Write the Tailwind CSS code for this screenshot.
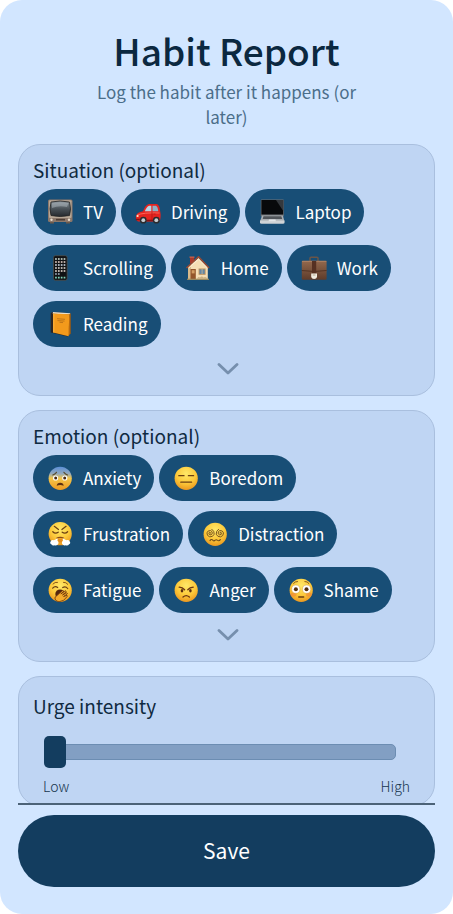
<!DOCTYPE html>
<html lang="en">
<head>
  <meta charset="UTF-8" />
  <meta name="viewport" content="width=device-width, initial-scale=1.0"/>
  <title>Habit Report</title>
  <script src="https://cdn.jsdelivr.net/npm/@tailwindcss/browser@4"></script>
</head>

<body class="bg-white font-['Noto_Sans_CJK_SC','Noto_Sans',sans-serif] text-[#0f2a41]">

  <!-- shared gradients -->
  <svg class="absolute size-0" aria-hidden="true">
    <defs>
      <radialGradient id="face" cx="0.5" cy="0.3" r="0.75">
        <stop offset="0" stop-color="#ffe868" />
        <stop offset="0.55" stop-color="#fcc93a" />
        <stop offset="1" stop-color="#e8901c" />
      </radialGradient>
      <linearGradient id="scared" x1="0" y1="0" x2="0" y2="1">
        <stop offset="0" stop-color="#5b8fd8" />
        <stop offset="0.3" stop-color="#93a9bd" />
        <stop offset="0.5" stop-color="#f4c64a" />
        <stop offset="1" stop-color="#ec9a22" />
      </linearGradient>
      <linearGradient id="screen" x1="0" y1="0" x2="0" y2="1">
        <stop offset="0" stop-color="#8b949b" />
        <stop offset="0.5" stop-color="#4a5258" />
        <stop offset="1" stop-color="#25292d" />
      </linearGradient>
      <linearGradient id="leather" x1="0" y1="0" x2="0" y2="1">
        <stop offset="0" stop-color="#94694d" />
        <stop offset="1" stop-color="#5d3b2a" />
      </linearGradient>
    </defs>
  </svg>

  <div class="flex h-screen flex-col rounded-[22px] bg-[#d2e6ff] px-[18px] pb-[27px]">

    <header class="px-16 pt-[25px] pb-[15px] text-center">
      <h1 class="text-[37px] leading-[50px] font-medium text-[#0b2840]">Habit Report</h1>
      <p class="mt-1 text-[17px] leading-[25px] text-[#4b6e8a]">Log the habit after it happens (or later)</p>
    </header>

    <main class="flex min-h-0 flex-1 flex-col gap-[14px] overflow-y-auto border-b-2 border-[#4c6378] [scrollbar-width:none]">

      <section class="shrink-0 rounded-[22px] border border-[#a9bfde] bg-[#bfd5f3] px-[14px] pt-3">
        <h2 class="mb-[6px] text-[19px] leading-[26px]">Situation (optional)</h2>
        <div class="flex flex-wrap gap-x-[5px] gap-y-[10px]">
          <button class="flex h-[46px] items-center gap-[10px] rounded-full bg-[#184e76] pr-[13px] pl-[14px] text-[17px] text-white">
            <svg class="size-[26px]" viewBox="0 0 26 26">
              <path d="M3 22h4v2.600H3zM19 22h4v2.600h-4z" fill="#6d5a4c" />
              <rect x="1" y="0.500" width="24.500" height="22.500" rx="1.500" fill="#8b776a" />
              <rect x="2" y="1.200" width="22.500" height="17.800" rx="1" fill="#b7a796" />
              <path d="M4 3Q13 1 22.500 3Q24.500 10 22.500 16.500Q13 18.600 4 16.500Q2 10 4 3z" fill="url(#screen)" stroke="#222" stroke-width="0.800" />
              <path d="M5 4Q13 2.500 21.500 4L20 8Q12 6 5 9z" fill="#b9c2c8" opacity="0.450" />
              <path d="M9 20.700h9" stroke="#4d3d33" stroke-width="1.600" />
              <circle cx="4.500" cy="20.700" r="1.200" fill="#e7ddce" /><circle cx="22" cy="20.700" r="1.200" fill="#e7ddce" />
            </svg>
            TV
          </button>
          <button class="flex h-[46px] items-center gap-[10px] rounded-full bg-[#184e76] pr-[13px] pl-[14px] text-[17px] text-white">
            <svg class="size-[26px]" viewBox="0 0 26 26">
              <path d="M1 17Q1.500 13.500 8 12.200Q10.500 5.500 14 5H21.500Q24.500 5 25.200 12.500Q26.200 17 25 21.500L22 22.500H3Q0.500 21.500 1 17z" fill="#e5231f" />
              <path d="M9.800 12.300Q11.800 7.200 14.200 6.700H16.300V12.300z" fill="#b9d4e4" />
              <path d="M17.500 6.700H21Q22.700 7.500 23.300 12.300H17.500z" fill="#8fb1c6" />
              <path d="M2 16.200Q8 13.300 24.500 14" stroke="#ff6b5c" stroke-width="0.900" fill="none" />
              <path d="M17 13v8M18.500 15h2" stroke="#a5120f" stroke-width="0.600" />
              <path d="M0.800 20.500h4M11.500 21.500h7" stroke="#871311" stroke-width="1.400" />
              <circle cx="2.600" cy="17" r="1.100" fill="#ffe9c7" />
              <circle cx="8.300" cy="21.200" r="3.400" fill="#2b2b2e" /><circle cx="8.300" cy="21.200" r="1.900" fill="#c6ccd1" />
              <circle cx="21.300" cy="21.200" r="3.400" fill="#2b2b2e" /><circle cx="21.300" cy="21.200" r="1.900" fill="#c6ccd1" />
            </svg>
            Driving
          </button>
          <button class="flex h-[46px] items-center gap-[10px] rounded-full bg-[#184e76] pr-[13px] pl-[14px] text-[17px] text-white">
            <svg class="size-[26px]" viewBox="0 0 26 26">
              <rect x="1.800" y="0.600" width="23" height="17" rx="0.800" fill="#6f7377" />
              <rect x="2.400" y="1" width="21.800" height="14.500" fill="#08090b" />
              <path d="M17 1h7.200V12z" fill="#34383d" />
              <path d="M3 16.500H23.800L25.500 22.500H1z" fill="#a9adb1" />
              <path d="M4.500 17.300H22.300L23.200 20H3.700z" fill="#505459" />
              <path d="M1 21.500H25.500V24Q25.300 24.800 24 24.800H2.500Q1.200 24.800 1 24z" fill="#d0d3d6" />
              <path d="M10 20.600h6.500l0.400 1.700H9.600z" fill="#e4e6e8" />
            </svg>
            Laptop
          </button>
          <button class="flex h-[46px] items-center gap-[10px] rounded-full bg-[#184e76] pr-[13px] pl-[14px] text-[17px] text-white">
            <svg class="size-[26px]" viewBox="0 0 26 26">
              <rect x="6.500" y="0.700" width="13.600" height="24.600" rx="1.800" fill="#111214" stroke="#555047" stroke-width="0.700" />
              <g stroke-width="1.700" stroke-dasharray="1.700 1.150" fill="none">
                <path d="M8.100 4H19" stroke="#d9e7dc" />
                <path d="M8.100 7H19" stroke="#f0d9cf" />
                <path d="M8.100 10H19" stroke="#d5e0ee" />
                <path d="M8.100 13H19" stroke="#e6e0da" />
                <path d="M8.100 16H19" stroke="#f1e5da" />
                <path d="M8.100 19H13" stroke="#a7b6c9" />
                <path d="M8.100 22.700H19" stroke="#7fd5b8" />
              </g>
            </svg>
            Scrolling
          </button>
          <button class="flex h-[46px] items-center gap-[10px] rounded-full bg-[#184e76] pr-[13px] pl-[14px] text-[17px] text-white">
            <svg class="size-[26px]" viewBox="0 0 26 26">
              <path d="M5 2h4v6H5z" fill="#a8392c" />
              <path d="M4.500 1.500h5v1.300h-5z" fill="#c9604a" />
              <path d="M3 12L13.500 3L22.800 12.500V24.500H3z" fill="#f5deb5" />
              <path d="M3 12L6 9.500V24.500H3z" fill="#d9b98a" />
              <path d="M1.500 13L13.500 1.800L24 13" fill="none" stroke="#9c4a32" stroke-width="1.500" stroke-linejoin="round" />
              <path d="M3.800 13L13.500 4.200L22.500 13" fill="none" stroke="#fff3dc" stroke-width="0.800" />
              <rect x="5.500" y="14" width="5.300" height="10.500" fill="#94562b" />
              <rect x="6.700" y="15.200" width="2.900" height="3.200" fill="#d39d63" />
              <rect x="13.600" y="13.500" width="7" height="6.300" fill="#b98f5c" /><rect x="14.500" y="14.400" width="5.200" height="4.500" fill="#6488a5" />
              <path d="M17.100 14v5" stroke="#d9c19a" stroke-width="0.700" />
              <path d="M2 24.300H24" stroke="#9c8b5d" stroke-width="1.200" />
              <path d="M12 24q1-3 3-1.500q2-2 3.500 0q2.500-1.500 4 1.500z" fill="#c9b083" />
            </svg>
            Home
          </button>
          <button class="flex h-[46px] items-center gap-[10px] rounded-full bg-[#184e76] pr-[13px] pl-[14px] text-[17px] text-white">
            <svg class="size-[26px]" viewBox="0 0 26 26">
              <path d="M9 6V3.200Q9 2.200 10 2.200H16Q17 2.200 17 3.200V6" fill="none" stroke="#6a5548" stroke-width="1.500" />
              <rect x="0.800" y="5.800" width="24.800" height="19" rx="1" fill="url(#leather)" />
              <path d="M0.800 15.500Q13 17.500 25.600 15.500" stroke="#4a2c1f" stroke-width="0.800" fill="none" />
              <path d="M1 6.400H25.400" stroke="#b58767" stroke-width="0.800" />
              <rect x="11" y="6" width="4.200" height="12.500" fill="#563122" />
              <path d="M10.200 18.500H16V22Q15.500 24 13.100 24Q10.700 24 10.200 22z" fill="#f1ede2" />
              <path d="M11.700 19.500h2.800v1h-2.800z" fill="#b7ab91" />
            </svg>
            Work
          </button>
          <button class="flex h-[46px] items-center gap-[10px] rounded-full bg-[#184e76] pr-[13px] pl-[14px] text-[17px] text-white">
            <svg class="size-[26px]" viewBox="0 0 26 26">
              <path d="M3.700 2L6 1L23.500 2.300V22.500L20.500 25.400L3.700 21.500z" fill="#2d2521" />
              <path d="M6 1L23.500 2.300L22.500 3.500L5.700 2.700z" fill="#e8e0d0" />
              <path d="M22.300 3.200L23.600 2.500V22.700L20.800 25.200z" fill="#b96a10" />
              <path d="M6 2.500L22.300 3.300L21.500 25.200L6 21.500z" fill="#f39a1c" />
              <path d="M10 7.700L18 8.300M10.500 9.600L17.500 10.100M12.500 11.300L16 11.600" stroke="#9b5d15" stroke-width="0.600" />
              <path d="M6.800 2.800V21.500" stroke="#ffbd4e" stroke-width="0.700" />
            </svg>
            Reading
          </button>
        </div>
        <button class="flex h-12 w-full items-center justify-center pb-1 pl-[2px]" aria-label="Show more situations">
          <svg class="h-3 w-[22px]" viewBox="0 0 22 12"><path d="M2 1.500L11 10L20 1.500" fill="none" stroke="#768fad" stroke-width="2.800" stroke-linecap="round" stroke-linejoin="round" /></svg>
        </button>
      </section>

      <section class="shrink-0 rounded-[22px] border border-[#a9bfde] bg-[#bfd5f3] px-[14px] pt-3">
        <h2 class="mb-[6px] text-[19px] leading-[26px]">Emotion (optional)</h2>
        <div class="flex flex-wrap gap-x-[5px] gap-y-[10px]">
          <button class="flex h-[46px] items-center gap-[10px] rounded-full bg-[#184e76] pr-[13px] pl-[14px] text-[17px] text-white">
            <svg class="size-[26px]" viewBox="0 0 26 26">
              <circle cx="13.200" cy="13.300" r="11.600" fill="url(#scared)" />
              <path d="M5.800 10Q8 9.300 9.500 7.300M20.600 10Q18.400 9.300 16.900 7.300" fill="none" stroke="#5a4a2c" stroke-width="1.100" stroke-linecap="round" />
              <circle cx="8.600" cy="13" r="2.600" fill="#fff" /><circle cx="17.800" cy="13" r="2.600" fill="#fff" />
              <circle cx="8.700" cy="13" r="1.500" fill="#4b2b10" /><circle cx="17.700" cy="13" r="1.500" fill="#4b2b10" />
              <path d="M9.700 20.700Q10 17.800 13.200 17.800Q16.400 17.800 16.700 20.700Q13.200 19.500 9.700 20.700z" fill="#5c2f12" />
            </svg>
            Anxiety
          </button>
          <button class="flex h-[46px] items-center gap-[10px] rounded-full bg-[#184e76] pr-[13px] pl-[14px] text-[17px] text-white">
            <svg class="size-[26px]" viewBox="0 0 26 26">
              <circle cx="13.200" cy="13.300" r="11.600" fill="url(#face)" />
              <path d="M5.800 10.700H11M15.400 10.700H20.600M7.800 17.200H18.600" stroke="#6b3f12" stroke-width="1.300" stroke-linecap="round" />
            </svg>
            Boredom
          </button>
          <button class="flex h-[46px] items-center gap-[10px] rounded-full bg-[#184e76] pr-[13px] pl-[14px] text-[17px] text-white">
            <svg class="size-[26px]" viewBox="0 0 26 26">
              <circle cx="13.200" cy="12.700" r="11.600" fill="url(#face)" />
              <path d="M7.300 5.300L11.500 8.500M19.100 5.300L14.900 8.500" stroke="#6b3f12" stroke-width="1.200" stroke-linecap="round" />
              <path d="M5.800 10.700Q8.300 13.300 11.200 11.200M20.600 10.700Q18.100 13.300 15.200 11.200" fill="none" stroke="#6b3f12" stroke-width="1.300" stroke-linecap="round" />
              <path d="M9.500 17.300Q13.200 15.300 16.900 17.300" fill="none" stroke="#8a4a14" stroke-width="1.200" />
              <path d="M10.800 17.500Q10.500 19.500 11.700 21.500H14.700Q15.900 19.500 15.600 17.500z" fill="#e58d1e" />
              <path d="M10.500 17.300Q10.800 18.600 10.300 19.600Q12.200 21 11.300 23Q10 25 7.800 24.300Q5.500 25.200 4.300 23.300Q2.300 22.300 3.800 20.300Q4.600 18.600 6.800 19.200Q8.500 18.800 10.500 17.300zM15.900 17.300Q15.600 18.600 16.100 19.600Q14.200 21 15.100 23Q16.400 25 18.600 24.300Q20.900 25.200 22.100 23.300Q24.100 22.300 22.600 20.300Q21.800 18.600 19.600 19.200Q17.900 18.800 15.900 17.300z" fill="#fff" />
            </svg>
            Frustration
          </button>
          <button class="flex h-[46px] items-center gap-[10px] rounded-full bg-[#184e76] pr-[13px] pl-[14px] text-[17px] text-white">
            <svg class="size-[26px]" viewBox="0 0 26 26">
              <circle cx="13.200" cy="13.300" r="11.600" fill="url(#face)" />
              <g fill="none" stroke="#6e4a1c" stroke-width="0.900" stroke-linecap="round">
                <path d="M8.400 12.200Q8.700 10.900 7.600 11.200Q6.300 12 7.300 13.500Q9 14.500 10.200 12.800Q10.800 10.300 8.500 9.500Q5.600 9.300 4.900 11.900Q4.800 15 7.800 15.900Q11 16 12.200 13.200Q12.500 10 9.800 8.200" />
                <path d="M18 12.200Q17.700 10.900 18.800 11.200Q20.100 12 19.100 13.500Q17.400 14.500 16.200 12.800Q15.600 10.300 17.900 9.500Q20.800 9.300 21.500 11.900Q21.600 15 18.600 15.900Q15.400 16 14.200 13.200Q13.900 10 16.600 8.200" />
                <path d="M8 19.600Q9.400 17.600 11 19.400Q12 20.400 13.200 19.200Q14.400 18.200 15.500 19.400Q17 20.300 18.400 18.700" stroke-width="1.100" />
              </g>
            </svg>
            Distraction
          </button>
          <button class="flex h-[46px] items-center gap-[10px] rounded-full bg-[#184e76] pr-[13px] pl-[14px] text-[17px] text-white">
            <svg class="size-[26px]" viewBox="0 0 26 26">
              <circle cx="13.200" cy="13.300" r="11.600" fill="url(#face)" />
              <path d="M6 7Q8 4.700 10.500 5.300M16.500 5.300Q19 5 20.800 7.300" fill="none" stroke="#8a5716" stroke-width="1" stroke-linecap="round" />
              <path d="M5.700 11.200Q8 8.500 10.700 10.500M15.700 10.500Q18.500 8.700 20.700 11.500" fill="none" stroke="#6b3f12" stroke-width="1.200" stroke-linecap="round" />
              <ellipse cx="13" cy="17" rx="4.700" ry="4.500" fill="#54260f" />
              <path d="M8 22Q7.500 19.500 9.700 18.800L15.500 13.500Q16.500 13.300 16.400 14.400L13.800 17L18.400 13.700Q19.500 13.900 19 15L15.500 18L19.700 15.700Q20.700 16 20.200 17L16.600 19.500L20 18.300Q20.800 18.900 20 19.700Q17 24.500 12 24.800Q9 24.500 8 22z" fill="#f4ab2c" stroke="#6b340c" stroke-width="0.800" />
            </svg>
            Fatigue
          </button>
          <button class="flex h-[46px] items-center gap-[10px] rounded-full bg-[#184e76] pr-[13px] pl-[14px] text-[17px] text-white">
            <svg class="size-[26px]" viewBox="0 0 26 26">
              <circle cx="13.200" cy="13.300" r="11.600" fill="url(#face)" />
              <path d="M6.200 10.200Q9.500 10.400 11.600 12.800M20.200 10.200Q16.900 10.400 14.800 12.800" fill="none" stroke="#6b3511" stroke-width="1.300" stroke-linecap="round" />
              <ellipse cx="9" cy="13.800" rx="1.300" ry="1.700" fill="#5a2c0e" /><ellipse cx="17.400" cy="13.800" rx="1.300" ry="1.700" fill="#5a2c0e" />
              <path d="M10 20Q13.200 17.300 16.400 20" fill="none" stroke="#6b3511" stroke-width="1.300" stroke-linecap="round" />
            </svg>
            Anger
          </button>
          <button class="flex h-[46px] items-center gap-[10px] rounded-full bg-[#184e76] pr-[13px] pl-[14px] text-[17px] text-white">
            <svg class="size-[26px]" viewBox="0 0 26 26">
              <circle cx="13.200" cy="13.300" r="11.600" fill="url(#face)" />
              <ellipse cx="5.500" cy="17.500" rx="3" ry="2" fill="#ee7a3a" opacity="0.500" /><ellipse cx="20.900" cy="17.500" rx="3" ry="2" fill="#ee7a3a" opacity="0.500" />
              <path d="M5.500 6.500Q7 4.300 9.500 4.500M20.900 6.500Q19.400 4.300 16.900 4.500" fill="none" stroke="#8a5716" stroke-width="1" stroke-linecap="round" />
              <circle cx="7.800" cy="12.200" r="4.100" fill="#fff" stroke="#c98a2c" stroke-width="0.400" /><circle cx="18.600" cy="12.200" r="4.100" fill="#fff" stroke="#c98a2c" stroke-width="0.400" />
              <circle cx="7.900" cy="12.200" r="2" fill="#54300f" /><circle cx="18.500" cy="12.200" r="2" fill="#54300f" />
              <path d="M10.700 20H15.700" stroke="#6b3f12" stroke-width="1.300" stroke-linecap="round" />
            </svg>
            Shame
          </button>
        </div>
        <button class="flex h-12 w-full items-center justify-center pb-1 pl-[2px]" aria-label="Show more emotions">
          <svg class="h-3 w-[22px]" viewBox="0 0 22 12"><path d="M2 1.500L11 10L20 1.500" fill="none" stroke="#768fad" stroke-width="2.800" stroke-linecap="round" stroke-linejoin="round" /></svg>
        </button>
      </section>

      <section class="shrink-0 rounded-[22px] border border-[#a9bfde] bg-[#bfd5f3] px-[14px] pt-4 pb-2">
        <label for="urge" class="block text-[19px] leading-[26px]">Urge intensity</label>
        <div class="mt-[17px] pr-6 pl-[11px]">
          <input id="urge" type="range" min="0" max="10" value="0"
            class="block h-8 w-full appearance-none bg-transparent [&::-webkit-slider-runnable-track]:h-4 [&::-webkit-slider-runnable-track]:rounded-[5px] [&::-webkit-slider-runnable-track]:border [&::-webkit-slider-runnable-track]:border-[#6c8db2] [&::-webkit-slider-runnable-track]:bg-[#829fc3] [&::-webkit-slider-thumb]:-ml-px [&::-webkit-slider-thumb]:-mt-[9px] [&::-webkit-slider-thumb]:h-8 [&::-webkit-slider-thumb]:w-[22px] [&::-webkit-slider-thumb]:appearance-none [&::-webkit-slider-thumb]:rounded-[5px] [&::-webkit-slider-thumb]:bg-[#133d5f]" />
        </div>
        <div class="mt-[7px] flex justify-between px-[10px] text-[14px] leading-[22px] font-light text-[#16344d]">
          <span>Low</span>
          <span>High</span>
        </div>
      </section>
    </main>

    <button class="mt-[10px] h-[72px] w-full shrink-0 rounded-full bg-[#133d5f] text-[21px] text-white">Save</button>
  </div>

</body>
</html>
